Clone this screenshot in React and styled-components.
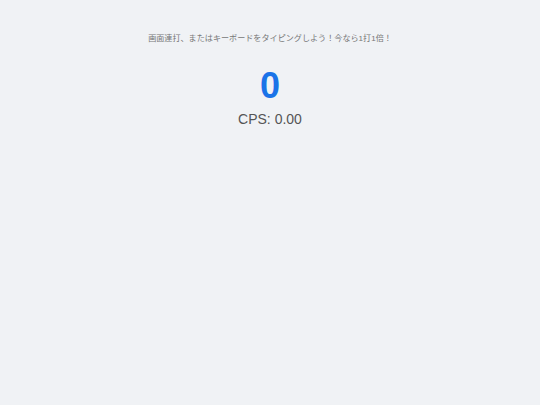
import styled, { createGlobalStyle } from "styled-components"
import { useEffect, useState } from "react"

const GlobalStyle = createGlobalStyle`
  html, body {
    margin: 0;
    padding: 0;
    background: #f0f2f5;
    font-family: "Liberation Sans", Arial, "Noto Sans CJK JP", sans-serif;
  }
`

const Page = styled.div`
  min-height: 100vh;
  display: flex;
  flex-direction: column;
  align-items: center;
  padding-top: 33px;
  box-sizing: border-box;
  user-select: none;
`

const Message = styled.p`
  margin: 0;
  font-size: 8.1px;
  line-height: 12px;
  color: #777;
  font-family: "Liberation Sans", "Noto Sans CJK JP", sans-serif;
`

const Counter = styled.div`
  margin-top: 20px;
  font-size: 36px;
  line-height: 42px;
  font-weight: bold;
  color: #1a73e8;
`

const Cps = styled.div`
  margin-top: 3px;
  font-size: 14px;
  line-height: 18px;
  color: #555;
`

const App = () => {
  const [count, setCount] = useState(0)
  const [start, setStart] = useState(null)

  useEffect(() => {
    const hit = () => {
      setCount(c => c + 1)
      setStart(s => s ?? Date.now())
    }
    window.addEventListener("keydown", hit)
    window.addEventListener("mousedown", hit)
    return () => {
      window.removeEventListener("keydown", hit)
      window.removeEventListener("mousedown", hit)
    }
  }, [])

  const secs = start ? (Date.now() - start) / 1000 : 0
  const cps = secs > 0 ? count / secs : 0

  return (
    <>
      <GlobalStyle />
      <Page>
        <Message>画面連打、またはキーボードをタイピングしよう！今なら1打1倍！</Message>
        <Counter>{count}</Counter>
        <Cps>CPS: {cps.toFixed(2)}</Cps>
      </Page>
    </>
  )
}

export default App
